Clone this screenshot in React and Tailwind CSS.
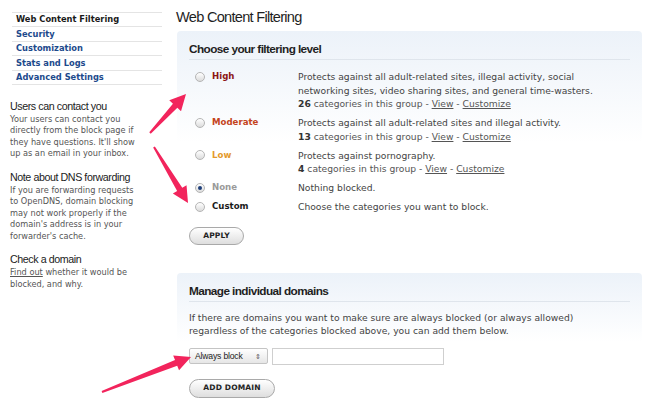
import React from "react";

const navItems = [
  { label: "Web Content Filtering", active: true },
  { label: "Security" },
  { label: "Customization" },
  { label: "Stats and Logs" },
  { label: "Advanced Settings" },
];

const levels = [
  {
    name: "High",
    color: "text-[#8c1515]",
    lines: [
      "Protects against all adult-related sites, illegal activity, social",
      "networking sites, video sharing sites, and general time-wasters.",
    ],
    count: 26,
  },
  {
    name: "Moderate",
    color: "text-[#c4441c]",
    lines: ["Protects against all adult-related sites and illegal activity."],
    count: 13,
  },
  {
    name: "Low",
    color: "text-[#e49a2c]",
    lines: ["Protects against pornography."],
    count: 4,
  },
  { name: "None", color: "text-[#9a9a9a]", lines: ["Nothing blocked."], checked: true },
  { name: "Custom", color: "text-[#1a1a1a]", lines: ["Choose the categories you want to block."] },
];

const tips = [
  {
    title: "Users can contact you",
    lines: ["Your users can contact you", "directly from the block page if", "they have questions. It'll show", "up as an email in your inbox."],
  },
  {
    title: "Note about DNS forwarding",
    lines: [
      "If you are forwarding requests",
      "to OpenDNS, domain blocking",
      "may not work properly if the",
      "domain's address is in your",
      "forwarder's cache.",
    ],
  },
  {
    title: "Check a domain",
    lines: [
      <>
        <span className="underline">Find out</span> whether it would be
      </>,
      "blocked, and why.",
    ],
  },
];

const verdana = "font-['DejaVu_Sans',Verdana,sans-serif]";
const helv = "font-['Liberation_Sans',Arial,sans-serif]";

function Radio({ checked }) {
  return (
    <span className="relative inline-block h-[10px] w-[10px] shrink-0 rounded-full border border-[#b5b5b5] bg-gradient-to-b from-white to-[#dcdcdc]">
      {checked ? (
        <span className="absolute left-1/2 top-1/2 h-[4px] w-[4px] -translate-x-1/2 -translate-y-1/2 rounded-full bg-[#1f3f7a]" />
      ) : null}
    </span>
  );
}

function PillButton({ children, className = "" }) {
  return (
    <button
      className={`rounded-full border border-[#a9a9a9] bg-gradient-to-b from-white to-[#dedede] text-[7.5px] font-bold tracking-[0.02em] text-[#222] ${verdana} ${className}`}
    >
      {children}
    </button>
  );
}

function Arrow({ from, to }) {
  const dx = to[0] - from[0];
  const dy = to[1] - from[1];
  const len = Math.hypot(dx, dy);
  const ux = dx / len;
  const uy = dy / len;
  const nx = -uy;
  const ny = ux;
  const head = 16;
  const hw = 8;
  const sw = 3;
  const tw = 1;
  const bx = to[0] - ux * head;
  const by = to[1] - uy * head;
  const pts = [
    [from[0] + nx * tw, from[1] + ny * tw],
    [bx + nx * sw, by + ny * sw],
    [bx + nx * hw, by + ny * hw],
    to,
    [bx - nx * hw, by - ny * hw],
    [bx - nx * sw, by - ny * sw],
    [from[0] - nx * tw, from[1] - ny * tw],
  ]
    .map((p) => p.join(","))
    .join(" ");
  return <polygon points={pts} fill="#f2245c" />;
}

function Sidebar() {
  return (
    <aside className="w-[176px] shrink-0 pl-[10px] pt-[12px]">
      <ul className={`ml-[2px] w-[150px] border-t border-[#e4e4e4] ${verdana}`}>
        {navItems.map((item) => (
          <li
            key={item.label}
            className={`flex h-[14.4px] items-center border-b border-[#e4e4e4] pl-[4px] text-[8.3px] font-bold ${
              item.active ? "text-[#1a1a1a]" : "text-[#1d4a8c]"
            }`}
          >
            {item.label}
          </li>
        ))}
      </ul>

      <div className="mt-[15px] space-y-[11px]">
        {tips.map((tip) => (
          <section key={tip.title}>
            <h3 className={`${helv} text-[10.7px] leading-[13px] tracking-[-0.04em] text-[#222]`}>{tip.title}</h3>
            <div className={`${verdana} mt-[1px] whitespace-nowrap text-[8.2px] leading-[11.5px] text-[#555]`}>
              {tip.lines.map((l, i) => (
                <div key={i}>{l}</div>
              ))}
            </div>
          </section>
        ))}
      </div>
    </aside>
  );
}

function Panel({ title, children, className = "" }) {
  return (
    <div
      className={`ml-[1px] w-[465px] rounded-[4px] bg-gradient-to-b from-[#ecf2f9] via-white to-white px-[12px] pt-[11px] ${className}`}
    >
      <h2 className={`${helv} border-b border-[#dfe5ec] pb-[3px] text-[11.8px] font-bold leading-[14px] tracking-[-0.05em] text-[#1f1f1f]`}>
        {title}
      </h2>
      {children}
    </div>
  );
}

export default function App() {
  return (
    <div className="relative h-[405px] w-[650px] overflow-hidden bg-white">
      <div className="flex">
        <Sidebar />
        <main className="pt-[9px]">
          <h1 className={`${helv} text-[14.6px] leading-[16px] tracking-[-0.05em] text-[#1f1f1f]`}>Web Content Filtering</h1>

          <Panel title="Choose your filtering level" className="mt-[6px] pb-[10px]">
            <div className={`${verdana} mt-[10px] space-y-[5.5px] text-[9.2px] leading-[13.5px] text-[#444]`}>
              {levels.map((lv) => (
                <div key={lv.name} className="flex">
                  <div className="flex h-[13.5px] w-[109px] shrink-0 items-center gap-[7px] self-start pl-[6px]">
                    <Radio checked={lv.checked} />
                    <span className={`text-[8.6px] font-bold ${lv.color}`}>{lv.name}</span>
                  </div>
                  <div className="whitespace-nowrap">
                    {lv.lines.map((l) => (
                      <div key={l}>{l}</div>
                    ))}
                    {lv.count ? (
                      <div className="text-[#555]">
                        <span className="font-bold text-[#333]">{lv.count}</span> categories in this group -{" "}
                        <span className="underline">View</span> - <span className="underline">Customize</span>
                      </div>
                    ) : null}
                  </div>
                </div>
              ))}
            </div>
            <PillButton className="mt-[13px] h-[18px] w-[55px]">APPLY</PillButton>
          </Panel>

          <Panel title="Manage individual domains" className="mt-[18px] pb-[12px]">
            <p className={`${verdana} mt-[9px] whitespace-nowrap text-[9.2px] leading-[13.5px] text-[#444]`}>
              If there are domains you want to make sure are always blocked (or always allowed)
              <br />
              regardless of the categories blocked above, you can add them below.
            </p>
            <div className="mt-[10px] flex items-center gap-[4px]">
              <div
                className={`flex h-[16px] w-[79px] items-center justify-between rounded-[2px] border border-[#c4c4c4] bg-gradient-to-b from-white to-[#e6e6e6] pl-[5px] pr-[6px] text-[8.6px] tracking-[-0.02em] text-[#222] ${helv}`}
              >
                <span>Always block</span>
                <span className="text-[7px] leading-none text-[#555]">⇕</span>
              </div>
              <div className="h-[17px] w-[172px] border border-[#cfcfcf] bg-white" />
            </div>
            <PillButton className="mt-[14px] h-[19px] w-[86px]">ADD DOMAIN</PillButton>
          </Panel>
        </main>
      </div>

      <svg className="pointer-events-none absolute left-0 top-0" width="650" height="405" viewBox="0 0 650 405">
        <Arrow from={[150, 133]} to={[186, 94]} />
        <Arrow from={[154, 147]} to={[188, 203]} />
        <Arrow from={[102, 392]} to={[191, 357]} />
      </svg>
    </div>
  );
}
